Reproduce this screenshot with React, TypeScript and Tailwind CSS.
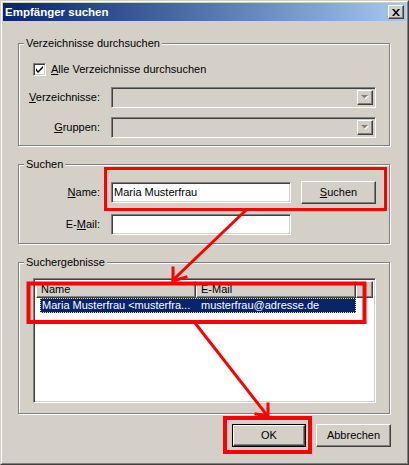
import React from 'react';

const sunken =
  'border border-t-[#808080] border-l-[#808080] border-r-white border-b-white shadow-[inset_1px_1px_0_#404040,inset_-1px_-1px_0_#d4d0c8]';
const raised =
  'border border-t-white border-l-white border-r-[#404040] border-b-[#404040] shadow-[inset_-1px_-1px_0_#808080]';

const Group: React.FC<{ label: string; h: string; children: React.ReactNode }> = ({ label, h, children }) => (
  <fieldset className="border border-[#808080] shadow-[1px_1px_0_#fff,inset_1px_1px_0_#fff] m-0 p-0">
    <legend className="ml-[5px] px-[2px] leading-[13px] bg-[#d4d0c8]">{label}</legend>
    <div className={`flex flex-col ${h}`}>{children}</div>
  </fieldset>
);

const Combo: React.FC = () => (
  <div className={`ml-[11px] w-[265px] h-[21px] bg-[#d4d0c8] p-[2px] flex justify-end ${sunken}`}>
    <div className={`w-[16px] h-full flex items-center justify-center bg-[#d4d0c8] ${raised}`}>
      <svg width="8" height="5" viewBox="0 0 8 5">
        <path d="M1 1h7l-3.5 3.5z" fill="#fff" />
        <path d="M0 0h7l-3.5 3.5z" fill="#808080" />
      </svg>
    </div>
  </div>
);

const Button: React.FC<{ children: React.ReactNode; w?: string; isDefault?: boolean }> = ({ children, w = 'w-[75px]', isDefault }) =>
  isDefault ? (
    <div className={`${w} h-[23px] border border-black`}>
      <div className={`w-full h-full flex items-center justify-center ${raised}`}>{children}</div>
    </div>
  ) : (
    <div className={`${w} h-[23px] flex items-center justify-center ${raised}`}>{children}</div>
  );

export default function App() {
  return (
    <div className="relative w-[409px] h-[465px] font-['Liberation_Sans',Arial,sans-serif] text-[11px] text-black select-none">
      <div className="h-full border border-t-[#d4d0c8] border-l-[#d4d0c8] border-r-[#404040] border-b-[#404040]">
        <div className="h-full border border-t-white border-l-white border-r-[#808080] border-b-[#808080] bg-[#d4d0c8] p-px flex flex-col">
          {/* Title bar */}
          <div className="h-[18px] bg-linear-to-r from-[#0a246a] to-[#a6caf0] flex items-center justify-between pl-[2px] pr-[2px]">
            <span className="text-white font-bold text-[11.5px] leading-[18px]">Empfänger suchen</span>
            <div className={`w-[16px] h-[14px] bg-[#d4d0c8] flex items-center justify-center ${raised}`}>
              <svg width="8" height="7" viewBox="0 0 8 7">
                <path d="M0 0h2l2 2.5 2-2.5h2l-3 3.5 3 3.5h-2l-2-2.5-2 2.5h-2l3-3.5z" fill="#000" />
              </svg>
            </div>
          </div>

          {/* Content */}
          <div className="flex flex-col pl-[15px] pr-[16px]">
            <div className="mt-[16px]">
              <Group label="Verzeichnisse durchsuchen" h="h-[95px]">
                <div className="mt-[13px] ml-[14px] flex items-center h-[13px]">
                  <div className={`w-[13px] h-[13px] bg-white flex items-center justify-center ${sunken}`}>
                    <svg width="7" height="7" viewBox="0 0 7 7">
                      <path d="M0 2v3l2 2 5-5v-2l-5 5z" fill="#000" />
                    </svg>
                  </div>
                  <span className="ml-[5px] leading-[13px]">
                    <u>A</u>lle Verzeichnisse durchsuchen
                  </span>
                </div>
                <div className="mt-[11px] flex items-center">
                  <span className="w-[81px] text-right">
                    <u>V</u>erzeichnisse:
                  </span>
                  <Combo />
                </div>
                <div className="mt-[9px] flex items-center">
                  <span className="w-[81px] text-right">
                    <u>G</u>ruppen:
                  </span>
                  <Combo />
                </div>
              </Group>
            </div>

            <div className="mt-[12px]">
              <Group label="Suchen" h="h-[72px]">
                <div className="mt-[10px] flex items-center h-[23px]">
                  <span className="w-[81px] text-right">
                    <u>N</u>ame:
                  </span>
                  <div className={`ml-[11px] w-[180px] h-[21px] bg-white pl-[2px] flex items-center ${sunken}`}>
                    Maria Musterfrau
                  </div>
                  <div className="ml-[10px]">
                    <Button>
                      <u>S</u>uchen
                    </Button>
                  </div>
                </div>
                <div className="mt-[10px] flex items-center h-[21px]">
                  <span className="w-[81px] text-right">
                    E-<u>M</u>ail:
                  </span>
                  <div className={`ml-[11px] w-[180px] h-[21px] bg-white ${sunken}`} />
                </div>
              </Group>
            </div>

            <div className="mt-[12px]">
              <Group label="Suchergebnisse" h="h-[144px]">
                <div className={`mt-[9px] ml-[14px] w-[343px] h-[125px] bg-white p-[2px] flex flex-col ${sunken}`}>
                  <div className="h-[17px] flex bg-[#d4d0c8]">
                    <div className={`w-[160px] h-full pl-[4px] leading-[15px] ${raised}`}>Name</div>
                    <div className={`w-[160px] h-full pl-[4px] leading-[15px] ${raised}`}>E-Mail</div>
                    <div className={`flex-1 h-full ${raised}`} />
                  </div>
                  <div className="ml-[4px] w-[316px] h-[15px] flex bg-[#0a246a] text-white border border-dotted border-[#e8dc9a] leading-[13px]">
                    <span className="w-[155px] pl-px whitespace-nowrap overflow-hidden">Maria Musterfrau &lt;musterfra...</span>
                    <span className="pl-[5px] whitespace-nowrap">musterfrau@adresse.de</span>
                  </div>
                </div>
              </Group>
            </div>

            <div className="mt-[10px] -mr-px flex justify-end gap-[10px]">
              <Button w="w-[74px]" isDefault>
                OK
              </Button>
              <Button>Abbrechen</Button>
            </div>
          </div>
        </div>
      </div>

      {/* Annotation overlay */}
      <svg className="absolute left-0 top-0 pointer-events-none" width="409" height="465" viewBox="0 0 409 465">
        <g fill="none" stroke="#ff0000" strokeLinecap="square">
          <rect x="105.5" y="168.5" width="280" height="41" strokeWidth="3" />
          <rect x="28.5" y="283.5" width="336" height="38.5" strokeWidth="4" />
          <rect x="225" y="418" width="85" height="34" strokeWidth="4" />
          <path d="M245 211L173 280" strokeWidth="3" />
          <path d="M173 268V281L186 277" strokeWidth="3" />
          <path d="M195 323L266 414" strokeWidth="3" />
          <path d="M268 404V416L256 414" strokeWidth="3" />
        </g>
      </svg>
    </div>
  );
}
